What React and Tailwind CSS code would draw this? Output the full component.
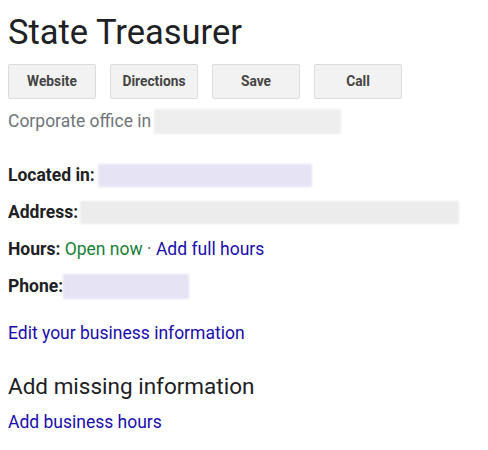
export default function App() {
  const buttons = ["Website", "Directions", "Save", "Call"];

  return (
    <div className="min-h-[450px] w-[488px] bg-white px-2 font-['Roboto',sans-serif] text-[#202124]">
      <h1 className="pt-[11px] text-[34.5px] leading-[42px] font-normal">State Treasurer</h1>

      <div className="mt-[11px] flex gap-[14px]">
        {buttons.map((b) => (
          <button
            key={b}
            className="h-[35px] w-[88px] rounded-[2px] border border-[#dcdcdc] bg-[#f2f2f2] text-[13.75px] font-bold text-[#444]"
          >
            {b}
          </button>
        ))}
      </div>

      <div className="mt-[9px] flex items-center text-[17.5px] leading-[26px] text-[#70757a]">
        <span>Corporate office in</span>
        <span className="ml-[3px] h-[25px] w-[187px] bg-[#eeeeee] blur-[1px]"></span>
      </div>

      {/* infos */}
      <div className="mt-[29px] flex flex-col gap-[12px] text-[17.5px] leading-[25px]">
        <div className="flex items-center">
          <b className="font-bold">Located in:</b>
          <span className="ml-[3px] h-[23px] w-[214px] bg-[#e6e3f5] blur-[1px]"></span>
        </div>
        <div className="flex items-center">
          <b className="font-bold">Address:</b>
          <span className="ml-[2px] h-[23px] w-[379px] bg-[#ececec] blur-[1px]"></span>
        </div>
        <div>
          <b className="font-bold">Hours:</b> <span className="text-[#188038]">Open now</span>
          <span className="text-[#5f6368]"> · </span>
          <a href="#" className="text-[#1a0dab]">Add full hours</a>
        </div>
        <div className="flex items-center">
          <b className="font-bold">Phone:</b>
          <span className="h-[25px] w-[126px] bg-[#e6e3f5] blur-[1px]"></span>
        </div>
      </div>

      <a href="#" className="mt-[22px] block text-[17.5px] leading-[25px] text-[#1a0dab]">
        Edit your business information
      </a>

      <h2 className="mt-[26px] text-[22.5px] leading-[28px] font-normal">Add missing information</h2>
      <a href="#" className="mt-[10px] block text-[17.5px] leading-[25px] text-[#1a0dab]">
        Add business hours
      </a>
    </div>
  );
}
